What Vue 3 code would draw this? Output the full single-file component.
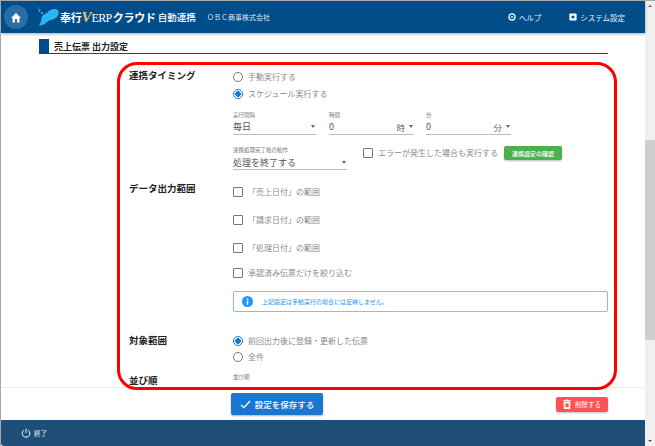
<template>
  <div class="window">
    <div class="main-col">
      <header class="app-bar">
        <button class="home-btn">
          <svg width="12" height="11" viewBox="0 0 24 22"><path d="M10 21v-7h4v7h5v-9h3L12 2 2 12h3v9z" fill="#fff" /></svg>
        </button>
        <div class="logo">
          <svg width="22" height="22" viewBox="0 0 22 22">
            <path d="M1.5 19.5C4 18 4 14 5 11 6 8 9 8 11 6 13 3 18 2 21 4 22.5 7 21 11 18 12.5 15 14 12 14 10 16 8 18 5 20 1.5 19.5z" fill="#29b6f6" />
            <circle cx="2.5" cy="4.5" r="0.9" fill="#4fc3f7" />
            <circle cx="5" cy="7" r="0.9" fill="#4fc3f7" />
            <circle cx="1" cy="2" r="0.6" fill="#4fc3f7" />
          </svg>
          <span class="logo-main">奉行<i class="logo-v">V</i><span class="logo-erp">ERP</span>クラウド</span>
          <span class="logo-sub">自動連携</span>
        </div>
        <span class="company">ＯＢＣ商事株式会社</span>
        <div class="spacer"></div>
        <a class="top-link">
          <svg width="8" height="8" viewBox="0 0 10 10"><circle cx="5" cy="5" r="3.8" fill="none" stroke="#fff" stroke-width="1.6" /><circle cx="5" cy="5" r="1.2" fill="#fff" /></svg>
          ヘルプ
        </a>
        <a class="top-link settings">
          <svg width="8" height="8" viewBox="0 0 10 10"><rect x="0.5" y="0.5" width="9" height="9" rx="1" fill="#fff" /><circle cx="5" cy="5" r="2" fill="#004d8a" /></svg>
          システム設定
        </a>
      </header>

      <div class="content">
        <div class="page-title"><span class="title-mark"></span><h1>売上伝票 出力設定</h1></div>

        <section class="form-row timing">
          <div class="row-label">連携タイミング</div>
          <div class="row-body">
            <label class="opt radio-opt"><span class="radio"></span>手動実行する</label>
            <label class="opt radio-opt"><span class="radio on"></span>スケジュール実行する</label>
            <div class="fields first-fields">
              <div class="field f-interval">
                <small>実行間隔</small>
                <div class="value">毎日<span class="caret"></span></div>
              </div>
              <div class="field f-hour">
                <small>時間</small>
                <div class="value">0<span class="unit">時</span><span class="caret"></span></div>
              </div>
              <div class="field f-min">
                <small>分</small>
                <div class="value">0<span class="unit">分</span><span class="caret"></span></div>
              </div>
            </div>
            <div class="fields second-fields">
              <div class="field f-after">
                <small>連携処理完了後の動作</small>
                <div class="value">処理を終了する<span class="caret"></span></div>
              </div>
              <label class="opt check-opt error-opt"><span class="check"></span>エラーが発生した場合も実行する</label>
              <button class="confirm-btn">連携設定の確認</button>
            </div>
          </div>
        </section>

        <section class="form-row output">
          <div class="row-label">データ出力範囲</div>
          <div class="row-body">
            <label v-for="item in ranges" :key="item" class="opt check-opt range-opt"><span class="check"></span>{{ item }}</label>
            <div class="info-box">
              <svg width="11" height="11" viewBox="0 0 22 22"><circle cx="11" cy="11" r="11" fill="#2196f3" /><rect x="9.5" y="9.5" width="3" height="8" fill="#fff" /><rect x="9.5" y="5" width="3" height="3" fill="#fff" /></svg>
              <span>上記設定は手動実行の場合には反映しません。</span>
            </div>
          </div>
        </section>

        <section class="form-row target">
          <div class="row-label">対象範囲</div>
          <div class="row-body">
            <label class="opt radio-opt"><span class="radio on"></span>前回出力後に登録・更新した伝票</label>
            <label class="opt radio-opt"><span class="radio"></span>全件</label>
          </div>
        </section>

        <section class="form-row order">
          <div class="row-label">並び順</div>
          <div class="row-body"><small class="order-small">並び順</small></div>
        </section>
      </div>

      <div class="action-bar">
        <button class="save-btn">
          <svg width="11" height="9" viewBox="0 0 12 10"><path d="M1 5.5 4.2 8.5 11 1.2" fill="none" stroke="#fff" stroke-width="1.5" /></svg>
          設定を保存する
        </button>
        <button class="delete-btn">
          <svg width="8" height="10" viewBox="0 0 8 10"><path d="M0 1.2h2.4L3 .4h2l.6.8H8v1H0zM.7 2.8h6.6V10H.7z" fill="#fff" /><rect x="2.3" y="4.4" width="3.4" height="3.8" fill="#f55" /></svg>
          削除する
        </button>
      </div>

      <footer class="status-bar">
        <svg width="10" height="10" viewBox="0 0 12 12"><path d="M3.4 2.6a4.6 4.6 0 1 0 5.2 0M6 .8v5" fill="none" stroke="#fff" stroke-width="1.2" /></svg>
        <span>終了</span>
      </footer>
    </div>

    <div class="scrollbar">
      <span class="arrow up"></span>
      <span class="thumb"></span>
      <span class="arrow down"></span>
    </div>

    <!-- annotation over the screenshot -->
    <div class="red-frame"></div>
  </div>
</template>

<script setup>
const ranges = ['「売上日付」の範囲', '「請求日付」の範囲', '「処理日付」の範囲', '承認済み伝票だけを絞り込む']
</script>

<style>
html,
body {
  margin: 0;
  overflow: hidden;
}
</style>

<style scoped>
.window {
  position: relative;
  width: 655px;
  height: 446px;
  box-sizing: border-box;
  display: flex;
  border-top: 1px solid #a8a8a8;
  border-left: 1px solid #a8a8a8;
  background: #fff;
  font-family: "Noto Sans CJK JP", "Noto Sans", sans-serif;
  color: #333;
  overflow: hidden;
}

.main-col {
  width: 644px;
  display: flex;
  flex-direction: column;
}

.app-bar {
  height: 32px;
  flex: none;
  display: flex;
  align-items: center;
  background: #004d8a;
  color: #fff;
  box-shadow: 0 1px 3px rgba(0, 0, 0, 0.35);
  position: relative;
  z-index: 2;
}

.home-btn {
  width: 24px;
  height: 24px;
  margin-left: 3px;
  padding: 0;
  border: none;
  border-radius: 50%;
  background: #2a6da3;
  display: flex;
  align-items: center;
  justify-content: center;
}

.logo {
  margin-left: 9px;
  display: flex;
  align-items: center;
  white-space: nowrap;
  width: 160px;
}

.logo-main {
  margin-left: 1px;
  font-size: 11px;
  font-weight: 700;
  letter-spacing: -0.2px;
  display: flex;
  align-items: baseline;
}

.logo-v {
  font-family: "Liberation Serif", serif;
  font-size: 15px;
  color: #e8c964;
}

.logo-erp {
  font-family: "Liberation Serif", serif;
  font-size: 12px;
  font-weight: 400;
  margin-right: 1px;
  letter-spacing: -0.6px;
}

.logo-sub {
  margin-left: 2px;
  font-size: 9.5px;
  font-weight: 500;
}

.company {
  margin-left: 10px;
  font-size: 7px;
  white-space: nowrap;
  color: #dde7f0;
}

.spacer {
  flex: 1;
}

.top-link {
  display: flex;
  align-items: center;
  gap: 3px;
  font-size: 7.5px;
  color: #e6edf4;
}

.settings {
  margin-left: 28px;
  margin-right: 20px;
}

.content {
  flex: 1;
  min-height: 0;
  overflow: hidden;
  padding: 6px 37px 0 38px;
}

.page-title {
  display: flex;
  align-items: center;
  height: 14px;
  border-bottom: 1.5px solid #004d8a;
}

.title-mark {
  width: 10px;
  height: 14px;
  background: #004d8a;
}

h1 {
  margin: 0 0 0 5px;
  font-size: 9px;
  font-weight: 700;
  color: #222;
}

.form-row {
  display: flex;
}

.row-label {
  width: 104px;
  margin-left: 90px;
  flex: none;
  font-size: 9.5px;
  font-weight: 700;
  line-height: 14px;
  color: #222;
}

.row-body {
  flex: 1;
  min-width: 0;
}

.timing {
  margin-top: 14px;
}

.opt {
  display: flex;
  align-items: center;
  font-size: 8px;
  line-height: 12px;
  color: #8a8a8a;
  white-space: nowrap;
}

.radio-opt {
  height: 17px;
  padding-left: 0;
}

.radio {
  width: 10px;
  height: 10px;
  box-sizing: border-box;
  margin-right: 5px;
  border: 1px solid #777;
  border-radius: 50%;
  flex: none;
}

.radio.on {
  border-color: #1976d2;
  background: radial-gradient(circle, #1976d2 0 2.6px, #fff 3px);
}

.check {
  width: 10px;
  height: 10px;
  box-sizing: border-box;
  margin-right: 5px;
  border: 1px solid #777;
  border-radius: 1px;
  flex: none;
}

.fields {
  display: flex;
}

.first-fields {
  margin-top: 9px;
}

.second-fields {
  margin-top: 11px;
  align-items: flex-start;
}

.field small {
  display: block;
  font-size: 5.5px;
  line-height: 8px;
  color: #777;
}

.value {
  display: flex;
  align-items: center;
  height: 15px;
  border-bottom: 1px solid #bdbdbd;
  font-size: 9px;
  color: #555;
}

.f-after .value {
  padding-top: 1px;
  height: 14px;
}

.unit {
  margin-left: auto;
  font-size: 8.5px;
  color: #666;
}

.caret {
  width: 0;
  height: 0;
  margin-left: auto;
  margin-right: 1px;
  border-left: 2.5px solid transparent;
  border-right: 2.5px solid transparent;
  border-top: 3px solid #666;
}

.unit + .caret {
  margin-left: 4px;
}

.f-interval {
  width: 83px;
}

.f-hour {
  width: 85px;
  margin-left: 13px;
}

.f-min {
  width: 85px;
  margin-left: 12px;
}

.f-after {
  width: 114px;
}

.error-opt {
  margin-left: 16px;
  margin-top: 1px;
}

.confirm-btn {
  width: 58px;
  height: 14px;
  margin-left: 6px;
  padding: 0;
  border: none;
  border-radius: 2px;
  background: #4caf50;
  color: #fff;
  font-family: inherit;
  font-size: 6px;
  font-weight: 500;
  box-shadow: 0 1px 2px rgba(0, 0, 0, 0.25);
}

.output {
  margin-top: 11px;
}

.range-opt {
  height: 12px;
  margin-bottom: 16px;
}

.range-opt:first-child {
  margin-top: 5px;
}

.range-opt:nth-child(4) {
  margin-top: -3px;
  margin-bottom: 12px;
}

.info-box {
  display: flex;
  align-items: center;
  gap: 9px;
  height: 21px;
  box-sizing: border-box;
  padding-left: 8px;
  border: 1px solid #7cc0f7;
  border-radius: 2px;
  font-size: 6px;
  color: #2196f3;
}

.target {
  margin-top: 21px;
}

.target .radio-opt {
  height: 16px;
}

.order {
  margin-top: 8px;
}

.order-small {
  display: block;
  font-size: 5.5px;
  line-height: 8px;
  color: #777;
}

.action-bar {
  height: 33px;
  flex: none;
  box-sizing: border-box;
  position: relative;
  display: flex;
  align-items: center;
  padding: 0 37px 0 230px;
  border-top: 1px solid #eee;
  background: #fff;
}

.save-btn {
  width: 92px;
  height: 22px;
  display: flex;
  align-items: center;
  justify-content: center;
  gap: 4px;
  padding: 0;
  border: none;
  border-radius: 2px;
  background: #1976d2;
  color: #fff;
  font-family: inherit;
  font-size: 8.5px;
  font-weight: 500;
  box-shadow: 0 1px 2px rgba(0, 0, 0, 0.3);
}

.delete-btn {
  width: 52px;
  height: 15px;
  margin-left: auto;
  display: flex;
  align-items: center;
  justify-content: center;
  gap: 4px;
  padding: 0;
  border: none;
  border-radius: 2px;
  background: #ff5252;
  color: #fff;
  font-family: inherit;
  font-size: 6.5px;
  box-shadow: 0 1px 2px rgba(0, 0, 0, 0.25);
}

.status-bar {
  height: 26px;
  flex: none;
  box-sizing: border-box;
  display: flex;
  align-items: center;
  gap: 3px;
  padding-left: 20px;
  border-bottom-left-radius: 3px;
  background: #1f4e79;
  color: #e8eef4;
  font-size: 6.5px;
}

.scrollbar {
  width: 10px;
  flex: none;
  display: flex;
  flex-direction: column;
  background: #f0f0f0;
}

.arrow {
  height: 10px;
  flex: none;
  position: relative;
}

.arrow::after {
  content: "";
  position: absolute;
  left: 3px;
  top: 4px;
  border-left: 2px solid transparent;
  border-right: 2px solid transparent;
}

.arrow.up::after {
  border-bottom: 2px solid #555;
}

.arrow.down::after {
  border-top: 2px solid #555;
}

.thumb {
  height: 200px;
  margin-top: 129px;
  margin-bottom: auto;
  background: #cdcdcd;
}

.red-frame {
  position: absolute;
  left: 116px;
  top: 61px;
  width: 500px;
  height: 328px;
  box-sizing: border-box;
  border: 3px solid #f00;
  border-radius: 20px;
  pointer-events: none;
}
</style>
